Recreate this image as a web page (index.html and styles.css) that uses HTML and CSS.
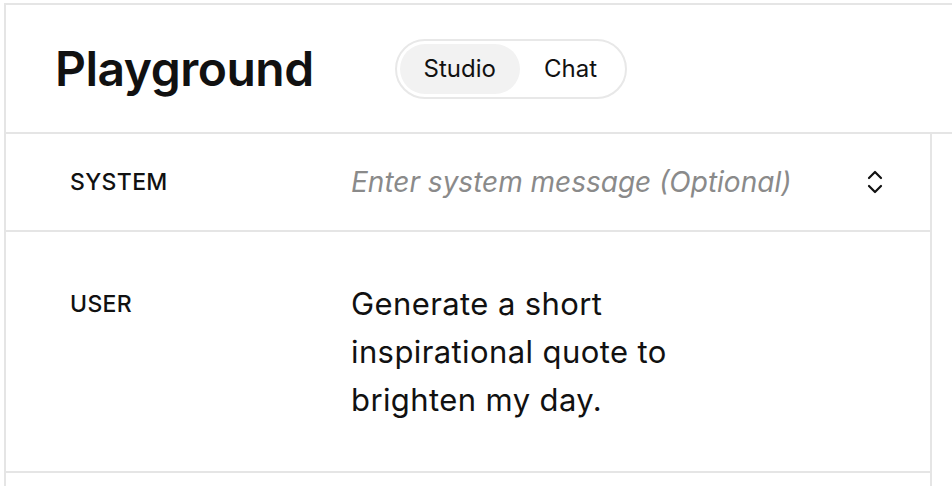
FILE: index.html
```html
<!DOCTYPE html>
<html>
<head>
<meta charset="utf-8">
<link rel="stylesheet" href="styles.css">
</head>
<body>
<div class="frame">
  <header class="header">
    <h1 class="title">Playground</h1>
    <div class="segmented">
      <span class="seg active">Studio</span>
      <span class="seg">Chat</span>
    </div>
  </header>
  <div class="body">
    <div class="panel">
      <div class="row system">
        <div class="label">SYSTEM</div>
        <div class="placeholder">Enter system message (Optional)</div>
        <svg class="chev" width="20" height="26" viewBox="0 0 20 26" fill="none" stroke="#111" stroke-width="2.2" stroke-linecap="round" stroke-linejoin="round">
          <path d="M4 9 L10 3 L16 9"/>
          <path d="M4 17 L10 23 L16 17"/>
        </svg>
      </div>
      <div class="row user">
        <div class="label">USER</div>
        <div class="msg">Generate a short inspirational quote to brighten my day.</div>
      </div>
      <div class="row empty"></div>
    </div>
    <div class="side"></div>
  </div>
</div>
</body>
</html>
```
FILE: styles.css
```css
html, body {
  margin: 0;
  padding: 0;
  background: #fff;
}
body {
  font-family: Inter, "Noto Sans", sans-serif;
  color: #111;
  padding: 3px 0 0 4px;
  height: 486px;
  box-sizing: border-box;
  overflow: hidden;
}
.frame {
  border-top: 2px solid #e5e5e5;
  border-left: 2px solid #e5e5e5;
  height: 100%;
  display: flex;
  flex-direction: column;
}
.header {
  flex: none;
  display: flex;
  align-items: center;
  border-bottom: 2px solid #e5e5e5;
  padding-left: 49px;
  box-sizing: border-box;
  height: 129px;
}
.title {
  margin: 0;
  font-size: 48px;
  font-weight: 600;
  letter-spacing: -0.5px;
  margin-right: 81px;
  line-height: 1;
}
.segmented {
  display: flex;
  align-items: center;
  border: 2px solid #e8e8e8;
  border-radius: 30px;
  padding: 3px;
  height: 60px;
  box-sizing: border-box;
  width: 232px;
}
.seg {
  font-size: 24px;
  height: 50px;
  display: flex;
  align-items: center;
  padding: 0 24px;
  border-radius: 25px;
}
.seg.active {
  background: #f2f2f2;
}
.body {
  flex: 1;
  display: flex;
}
.panel {
  width: 924px;
  border-right: 2px solid #e5e5e5;
  flex: none;
}
.row {
  display: flex;
  border-bottom: 2px solid #e5e5e5;
  padding-left: 64px;
}
.label {
  width: 281px;
  flex: none;
  font-size: 23px;
  font-weight: 500;
  letter-spacing: 0.35px;
}
.system {
  height: 98px;
  align-items: center;
  box-sizing: border-box;
}
.placeholder {
  font-style: italic;
  color: #8a8a8a;
  font-size: 28px;
  width: 514px;
  flex: none;
}
.chev {
  display: block;
}
.user {
  height: 241px;
  box-sizing: border-box;
  padding-top: 56px;
}
.user .label {
  line-height: 30px;
  margin-top: 1px;
}
.msg {
  font-size: 31px;
  line-height: 48px;
  letter-spacing: 0.4px;
  width: 340px;
  margin-top: -8px;
}
.row.empty {
  border-bottom: none;
  height: 20px;
}
```
